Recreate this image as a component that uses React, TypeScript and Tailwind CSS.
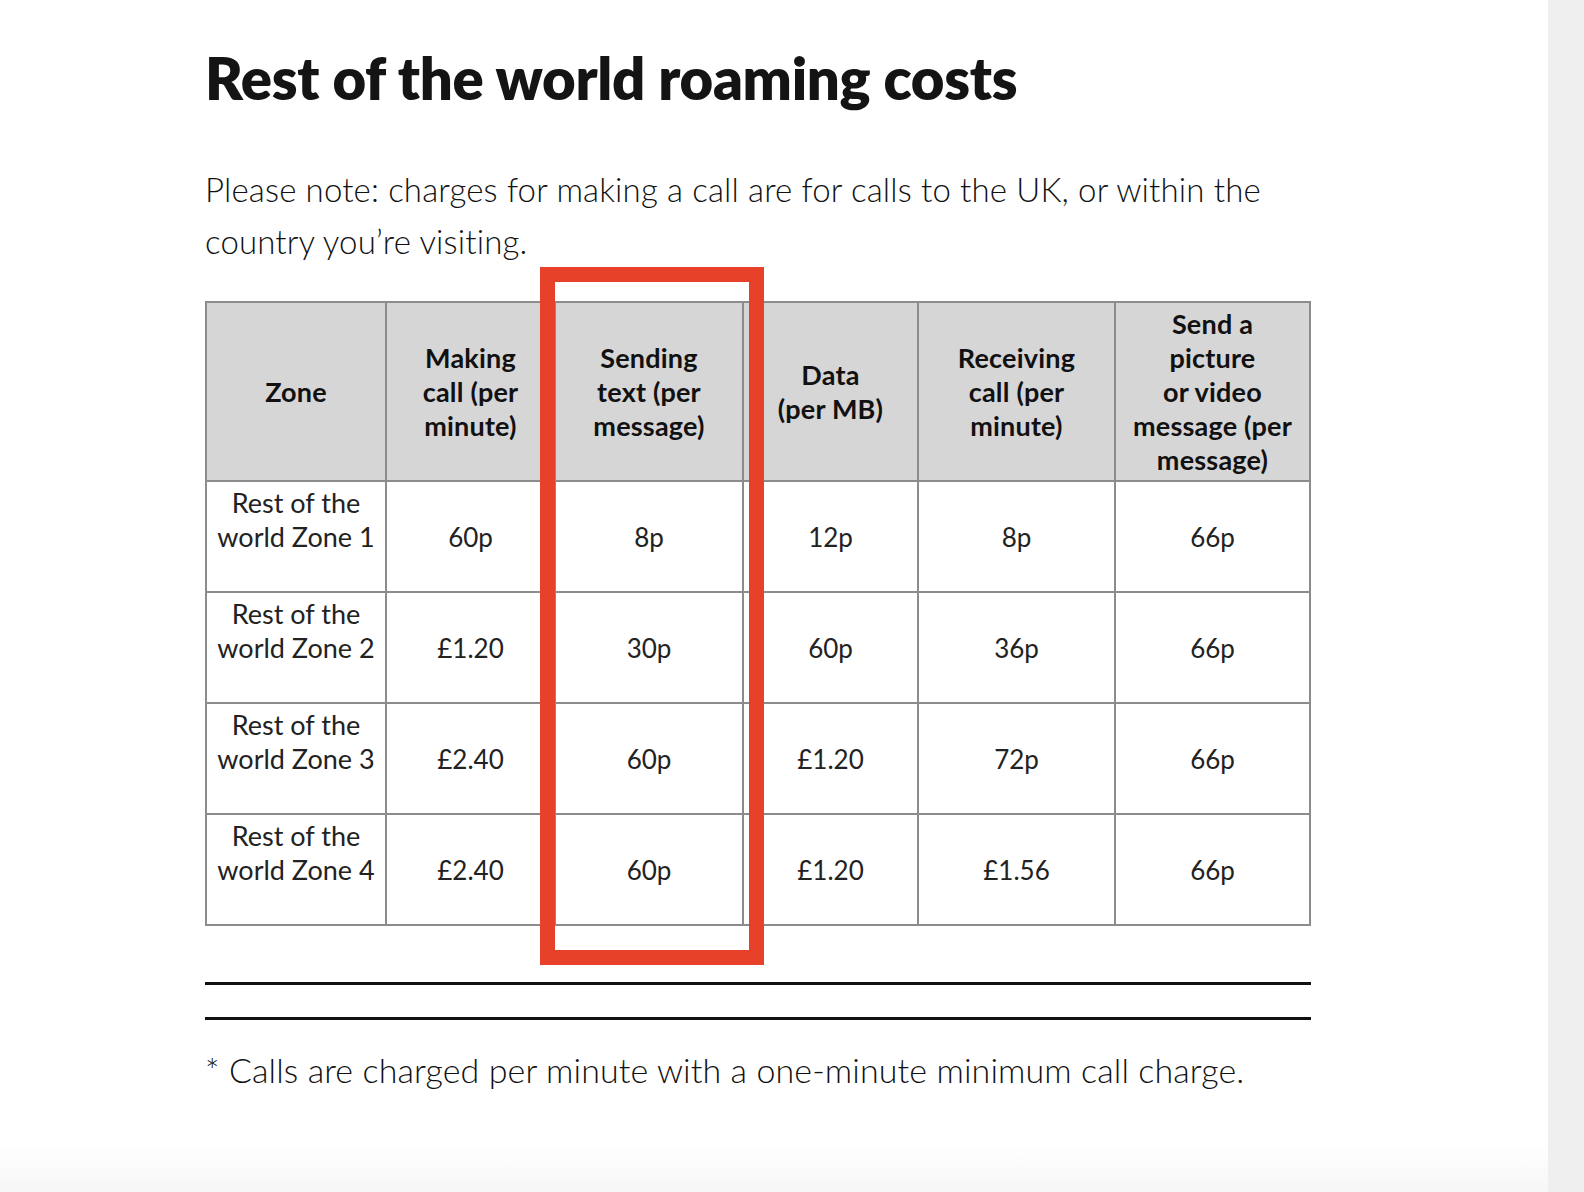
const rows = [
  ["1", "60p", "8p", "12p", "8p", "66p"],
  ["2", "£1.20", "30p", "60p", "36p", "66p"],
  ["3", "£2.40", "60p", "£1.20", "72p", "66p"],
  ["4", "£2.40", "60p", "£1.20", "£1.56", "66p"],
];

const widths = ["w-[180px]", "w-[169px]", "w-[188px]", "w-[175px]", "w-[197px]", "w-[195px]"];

export default function App() {
  return (
    <div className="flex min-h-[1192px] w-full bg-white font-['Lato',sans-serif] text-[#1a1a1a]">
      <main className="w-[1548px] bg-gradient-to-b from-white from-[96%] to-[#f6f6f6] pl-[205px]">
        <div className="relative w-[1106px] pt-[43px]">
          <h1 className="text-[58px] font-extrabold leading-[70px] tracking-[-0.3px] text-[#141414]">
            Rest of the world roaming costs
          </h1>

          <p className="mt-[50px] w-[1095px] text-[33px] font-light leading-[52px] tracking-[0.15px] text-[#111]">
            Please note: charges for making a call are for calls to the UK, or within the country
            you’re visiting.
          </p>

          <table className="mt-[34px] w-[1106px] table-fixed border-collapse border-2 border-[#8c8c8c] text-center text-[26px] leading-[34px]">
            <colgroup>
              {widths.map((w) => (
                <col key={w} className={w} />
              ))}
            </colgroup>
            <thead>
              <tr className="h-[179px] bg-[#d6d6d6] text-[27px] font-black tracking-[0.2px] text-[#111]">
                <th className="border-2 border-[#8c8c8c] px-1">Zone</th>
                <th className="border-2 border-[#8c8c8c] px-1">
                  Making
                  <br />
                  call (per
                  <br />
                  minute)
                </th>
                <th className="border-2 border-[#8c8c8c] px-1">
                  Sending
                  <br />
                  text (per
                  <br />
                  message)
                </th>
                <th className="border-2 border-[#8c8c8c] px-1">
                  Data
                  <br />
                  (per MB)
                </th>
                <th className="border-2 border-[#8c8c8c] px-1">
                  Receiving
                  <br />
                  call (per
                  <br />
                  minute)
                </th>
                <th className="border-2 border-[#8c8c8c] px-0">
                  Send a
                  <br />
                  picture
                  <br />
                  or video
                  <br />
                  message (per
                  <br />
                  message)
                </th>
              </tr>
            </thead>
            <tbody className="text-[#222]">
              {rows.map((r) => (
                <tr key={r[0]} className="h-[111px]">
                  <td className="border-2 border-[#8c8c8c] px-0 text-[27px]">
                    Rest of the
                    <br />
                    world Zone {r[0]}
                    <br />
                    &nbsp;
                  </td>
                  {r.slice(1).map((v, i) => (
                    <td key={i} className="border-2 border-[#8c8c8c]">
                      {v}
                    </td>
                  ))}
                </tr>
              ))}
            </tbody>
          </table>

          {/* highlight around the text column */}
          <div className="pointer-events-none absolute left-[335px] top-[267px] h-[698px] w-[224px] border-[15px] border-[#e8412a]" />

          <div className="mt-[56px] h-[3px] w-[1106px] bg-[#111]" />
          <div className="mt-[32px] h-[3px] w-[1106px] bg-[#111]" />

          <p className="mt-[28px] text-[34px] font-light leading-[44px] tracking-[0.1px] text-[#111]">
            * Calls are charged per minute with a one-minute minimum call charge.
          </p>
        </div>
      </main>
      <aside className="flex-1 bg-[#efefef]" />
    </div>
  );
}
